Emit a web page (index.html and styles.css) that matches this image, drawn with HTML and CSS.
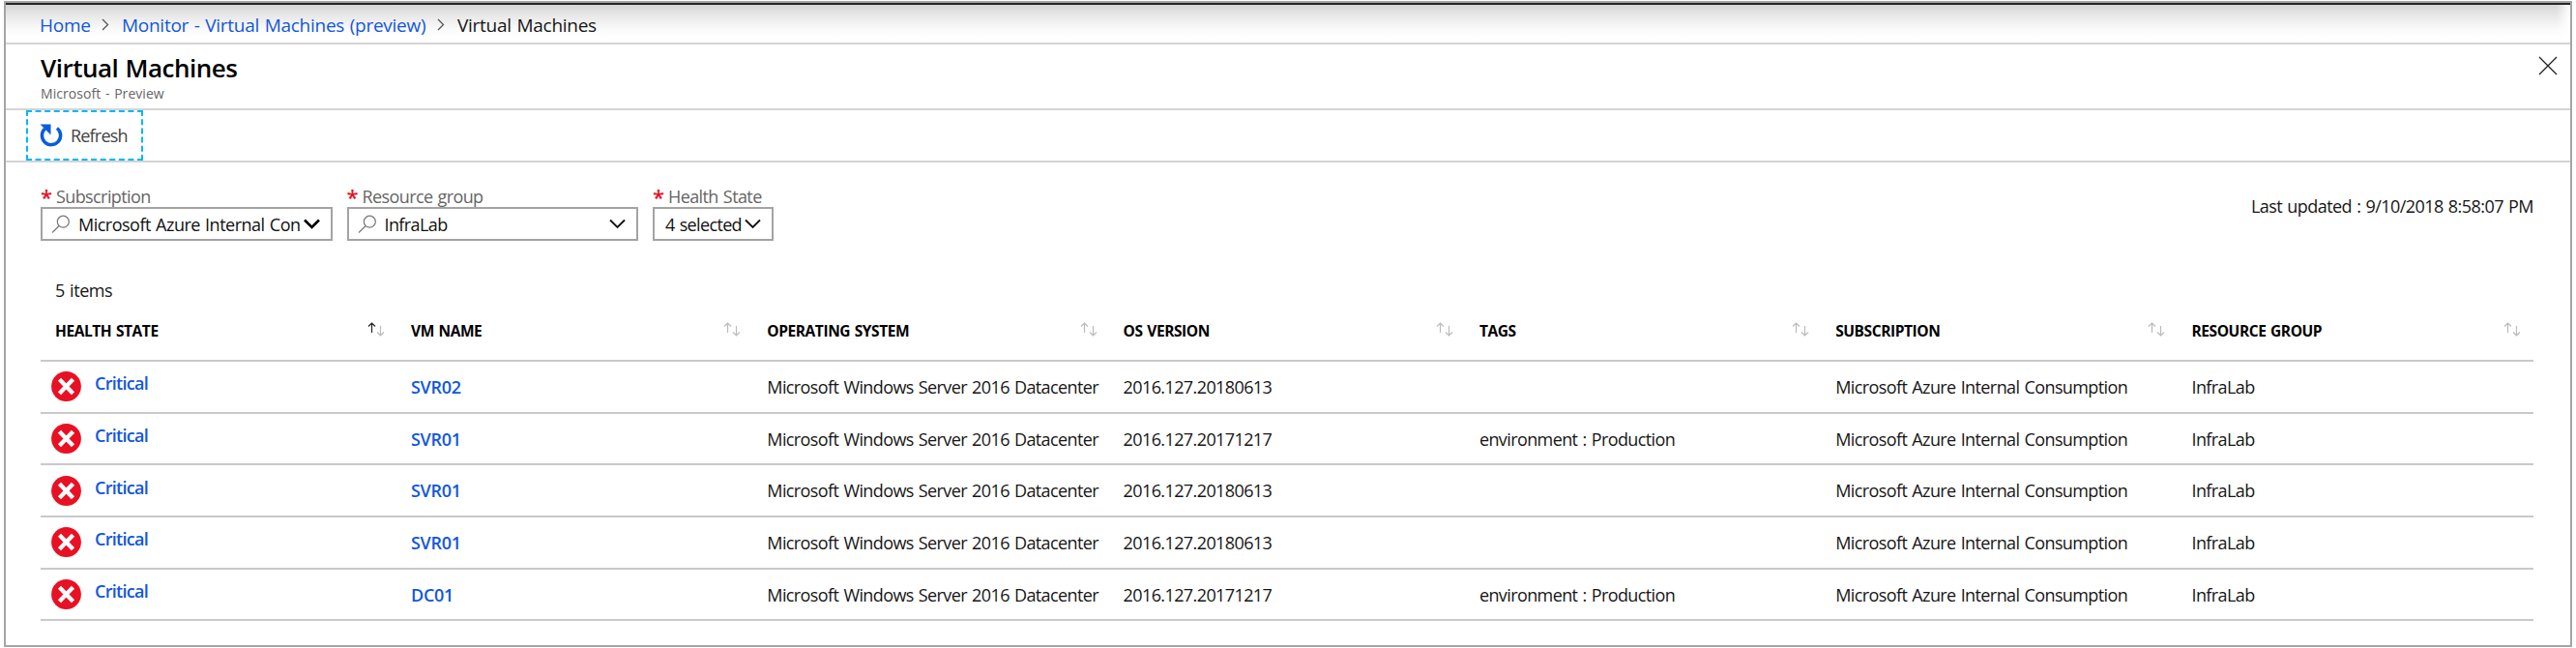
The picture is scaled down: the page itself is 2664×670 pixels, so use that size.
FILE: index.html
```
<!DOCTYPE html>
<html lang="en">
<head>
<meta charset="utf-8">
<title>Virtual Machines</title>
<link rel="stylesheet" href="styles.css">
</head>
<body>
<svg class="defs" width="0" height="0">
  <symbol id="critical" viewBox="0 0 31 31"><circle cx="15.5" cy="15.5" r="15.4" fill="#e81123"/><path d="M8.500 8.300 L22.500 22.700 M22.500 8.300 L8.500 22.700" stroke="#fff" stroke-width="4.400" fill="none"/></symbol>
  <symbol id="search" viewBox="0 0 20 20"><circle cx="12.300" cy="7.200" r="6" /><path d="M8.200 11.500 L1 18.500"/></symbol>
  <symbol id="chevron" viewBox="0 0 17 11"><path d="M1 1.500 L8.500 9 L16 1.500"/></symbol>
  <symbol id="up" viewBox="0 0 9 12"><path d="M4.500 11 V1 M1 4.500 L4.500 1 L8 4.500"/></symbol>
  <symbol id="down" viewBox="0 0 9 12"><path d="M4.500 1 V11 M1 7.500 L4.500 11 L8 7.500"/></symbol>
</svg>
<div class="blade">
  <nav class="crumbs">
    <a class="c-home">Home</a>
    <svg class="sep" viewBox="0 0 8 13"><path d="M1 1 L6.500 6.500 L1 12"/></svg>
    <a class="c-monitor">Monitor - Virtual Machines (preview)</a>
    <svg class="sep" viewBox="0 0 8 13"><path d="M1 1 L6.500 6.500 L1 12"/></svg>
    <span class="c-current">Virtual Machines</span>
  </nav>
  <header class="head">
    <div class="titles">
      <h1>Virtual Machines</h1>
      <p>Microsoft - Preview</p>
    </div>
    <svg class="close" viewBox="0 0 20 20"><path d="M1 1 L19 19 M19 1 L1 19"/></svg>
  </header>
  <div class="toolbar">
    <button class="refresh">
      <svg class="refresh-icon" viewBox="0 0 24 25"><path class="arc" d="M18 4.500 A9.600 9.600 0 1 1 5.500 5"/><path class="tip" d="M0.500 0.500 H11.500 V11.500 Z"/></svg>
      <span>Refresh</span>
    </button>
  </div>
  <section class="filters">
    <div class="field wide"><label><b>*</b><span>Subscription</span></label>
      <div class="select strong"><svg class="search"><use href="#search"/></svg><span class="value">Microsoft Azure Internal Consumption</span><svg class="chev"><use href="#chevron"/></svg></div></div>
    <div class="field wide"><label><b>*</b><span>Resource group</span></label>
      <div class="select"><svg class="search"><use href="#search"/></svg><span class="value">InfraLab</span><svg class="chev"><use href="#chevron"/></svg></div></div>
    <div class="field narrow"><label><b>*</b><span>Health State</span></label>
      <div class="select tight"><span class="value">4 selected</span><svg class="chev"><use href="#chevron"/></svg></div></div>
    <div class="updated">Last updated : 9/10/2018 8:58:07 PM</div>
  </section>
  <div class="count">5 items</div>
  <div class="grid">
    <div class="row header">
      <div class="th sorted"><span>HEALTH STATE</span><i><svg><use href="#up"/></svg><svg><use href="#down"/></svg></i></div>
      <div class="th"><span>VM NAME</span><i><svg><use href="#up"/></svg><svg><use href="#down"/></svg></i></div>
      <div class="th"><span>OPERATING SYSTEM</span><i><svg><use href="#up"/></svg><svg><use href="#down"/></svg></i></div>
      <div class="th"><span>OS VERSION</span><i><svg><use href="#up"/></svg><svg><use href="#down"/></svg></i></div>
      <div class="th"><span>TAGS</span><i><svg><use href="#up"/></svg><svg><use href="#down"/></svg></i></div>
      <div class="th"><span>SUBSCRIPTION</span><i><svg><use href="#up"/></svg><svg><use href="#down"/></svg></i></div>
      <div class="th"><span>RESOURCE GROUP</span><i><svg><use href="#up"/></svg><svg><use href="#down"/></svg></i></div>
    </div>
    <div class="row"><div class="state"><svg><use href="#critical"/></svg><a>Critical</a></div><div class="vm"><a>SVR02</a></div><div>Microsoft Windows Server 2016 Datacenter</div><div class="ver">2016.127.20180613</div><div></div><div>Microsoft Azure Internal Consumption</div><div>InfraLab</div></div>
    <div class="row"><div class="state"><svg><use href="#critical"/></svg><a>Critical</a></div><div class="vm"><a>SVR01</a></div><div>Microsoft Windows Server 2016 Datacenter</div><div class="ver">2016.127.20171217</div><div>environment : Production</div><div>Microsoft Azure Internal Consumption</div><div>InfraLab</div></div>
    <div class="row"><div class="state"><svg><use href="#critical"/></svg><a>Critical</a></div><div class="vm"><a>SVR01</a></div><div>Microsoft Windows Server 2016 Datacenter</div><div class="ver">2016.127.20180613</div><div></div><div>Microsoft Azure Internal Consumption</div><div>InfraLab</div></div>
    <div class="row"><div class="state"><svg><use href="#critical"/></svg><a>Critical</a></div><div class="vm"><a>SVR01</a></div><div>Microsoft Windows Server 2016 Datacenter</div><div class="ver">2016.127.20180613</div><div></div><div>Microsoft Azure Internal Consumption</div><div>InfraLab</div></div>
    <div class="row"><div class="state"><svg><use href="#critical"/></svg><a>Critical</a></div><div class="vm"><a>DC01</a></div><div>Microsoft Windows Server 2016 Datacenter</div><div class="ver">2016.127.20171217</div><div>environment : Production</div><div>Microsoft Azure Internal Consumption</div><div>InfraLab</div></div>
  </div>
</div>
</body>
</html>
```

FILE: styles.css
```
* { box-sizing: border-box; }
body { margin: 0; padding: 1px 4px 0; background: #fff; height: 670px; overflow: hidden; font-family: "Open Sans", "Noto Sans", sans-serif; font-size: 18px; line-height: 24px; letter-spacing: -0.600px; word-spacing: 1px; color: #161616; }
svg { fill: none; flex: none; display: block; }
.defs { position: absolute; }
a { color: #1157dc; }
.blade { height: 668px; border: 2px solid #a5a5a5; white-space: nowrap; }
.crumbs { height: 43px; border-top: 2px solid #252525; border-bottom: 2px solid #d4d4d4; background: linear-gradient(to left, #fff, transparent 14px), linear-gradient(#d6d6d6, #e9e9e9 30%, #fafafa 65%, #fff 85%); display: flex; align-items: center; padding: 2px 0 0 35px; font-size: 19px; letter-spacing: -0.270px; }
.sep { width: 8px; height: 13px; stroke: #555; stroke-width: 1.300; margin: 0 13px; }
.c-home { width: 51px; }
.c-monitor { width: 313px; }
.head { height: 68px; border-bottom: 2px solid #d4d4d4; display: flex; justify-content: space-between; padding: 8px 13px 0 36px; }
h1 { margin: 0; font-size: 26px; font-weight: 600; line-height: 32px; letter-spacing: -0.500px; color: #000; }
p { margin: 2px 0 0; font-size: 14px; line-height: 18px; letter-spacing: 0.050px; color: #666; }
.close { width: 20px; height: 20px; margin-top: 4px; stroke: #222; stroke-width: 1.300; }
.toolbar { height: 54px; border-bottom: 2px solid #d4d4d4; padding-left: 21px; }
.refresh { width: 121px; height: 52px; border: 2px dashed #00b8f5; background: none; display: flex; align-items: center; gap: 8px; padding: 0 0 0 12px; font: inherit; letter-spacing: -0.800px; color: #444; }
.refresh-icon { width: 24px; height: 25px; }
.arc { stroke: #0b5cdb; stroke-width: 3.500; }
.tip { fill: #0b5cdb; }
.filters { display: flex; padding: 24px 38px 0 36px; gap: 15px; }
.wide { width: 301.500px; }
.narrow { width: 125px; }
label { display: flex; height: 22px; gap: 7px; color: #666; align-items: center; }
label b { color: #e81123; font-size: 22px; font-weight: 600; width: 9px; }
.select { height: 35px; border: 2px solid #a3a3a3; display: flex; align-items: center; padding: 0 11px 0 9px; color: #111; }
.search { width: 20px; height: 20px; stroke: #777; stroke-width: 1.200; margin-right: 8px; }
.value { flex: 1; overflow: hidden; min-width: 0; }
.chev { width: 17px; height: 11px; stroke: #111; stroke-width: 1.900; margin-left: 3px; }
.strong .value { letter-spacing: -0.500px; }
.strong .chev { stroke: #000; stroke-width: 2.600; }
.tight { padding: 0 11px 0 11px; letter-spacing: -0.650px; }
.tight .chev { margin-left: 1px; }
.updated { margin-left: auto; padding-top: 9px; letter-spacing: -0.550px; }
.count { padding: 39px 0 0 51px; height: 69px; letter-spacing: -0.450px; }
.grid { margin: 0 38px 0 36px; }
.row { display: grid; grid-template-columns: 383px repeat(5, 368.300px) 1fr; height: 53.700px; border-bottom: 2px solid #c9c9c9; align-items: center; }
.row.header { height: 56px; font-size: 15.500px; font-weight: 700; letter-spacing: -0.420px; color: #000; align-items: start; padding-top: 12px; }
.th { display: flex; justify-content: space-between; }
.th i { display: flex; padding: 3px 27px 0 0; }
.th:last-child i { padding-right: 13px; }
.th svg { width: 9px; height: 12px; stroke: #bbb; stroke-width: 1.200; }
.th svg + svg { margin-top: 3px; }
.sorted svg:first-child { stroke: #222; }
.th.sorted { padding-left: 15px; }
.state { display: flex; padding-left: 11px; letter-spacing: -0.700px; }
.state svg { width: 31px; height: 31px; margin-right: 14px; }
.vm { letter-spacing: -0.300px; }
.row a { font-weight: 600; }
```
